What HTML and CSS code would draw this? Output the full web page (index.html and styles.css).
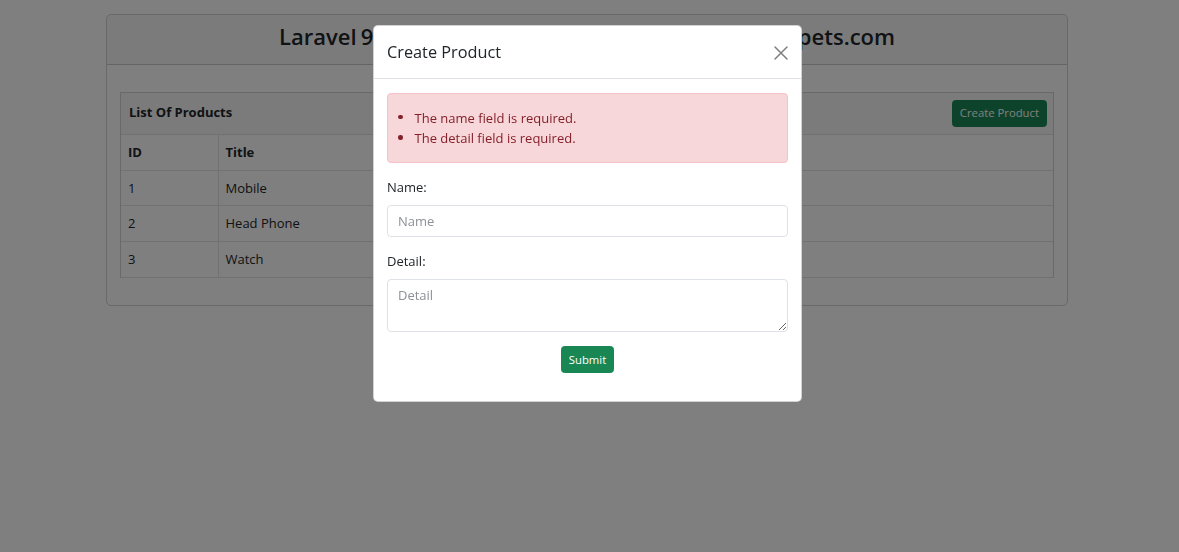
FILE: index.html
```html
<!DOCTYPE html>
<html lang="en">
<head>
<meta charset="utf-8">
<title>Laravel 9 Ajax Form Validation Example - NiceSnippets.com</title>
<link rel="stylesheet" href="styles.css">
</head>
<body>
<div class="page">
  <div class="card">
    <div class="card-header">
      <h2 class="page-title">Laravel 9 Ajax Form Validation Example - NiceSnippets.com</h2>
    </div>
    <div class="card-body">
      <div class="inner-card">
        <div class="inner-header">
          <span class="inner-title">List Of Products</span>
          <button class="btn btn-success">Create Product</button>
        </div>
        <table class="table">
          <thead>
            <tr><th class="col-id">ID</th><th class="col-title">Title</th><th>Detail</th></tr>
          </thead>
          <tbody>
            <tr><td>1</td><td>Mobile</td><td>Mobile Detail</td></tr>
            <tr><td>2</td><td>Head Phone</td><td>Head Phone Detail</td></tr>
            <tr><td>3</td><td>Watch</td><td>Watch Detail</td></tr>
          </tbody>
        </table>
      </div>
    </div>
  </div>
</div>

<div class="backdrop"></div>

<div class="modal">
  <div class="modal-header">
    <h5 class="modal-title">Create Product</h5>
    <button class="btn-close" aria-label="Close">
      <svg width="14" height="14" viewBox="0 0 14 14"><path d="M1 1L13 13M13 1L1 13" stroke="#000" stroke-width="1.5" stroke-linecap="round"/></svg>
    </button>
  </div>
  <div class="modal-body">
    <div class="alert">
      <ul class="errors">
        <li>The name field is required.</li>
        <li>The detail field is required.</li>
      </ul>
    </div>
    <form class="form">
      <div class="form-group">
        <label class="form-label" for="name">Name:</label>
        <input class="form-control" id="name" type="text" placeholder="Name">
      </div>
      <div class="form-group">
        <label class="form-label" for="detail">Detail:</label>
        <textarea class="form-control form-textarea" id="detail" placeholder="Detail"></textarea>
      </div>
      <div class="form-actions">
        <button class="btn btn-success" type="button">Submit</button>
      </div>
    </form>
  </div>
</div>
</body>
</html>
```

FILE: styles.css
```css
* { box-sizing: border-box; }

html, body {
  margin: 0;
  height: 100%;
}

body {
  font-family: "Open Sans", "Noto Sans", sans-serif;
  font-size: 13px;
  line-height: 20.6px;
  color: #212529;
  background: #fff;
}

.page {
  padding: 14px 111px 0 106px;
}

.card {
  border: 1px solid rgba(0, 0, 0, 0.175);
  border-radius: 5px;
  overflow: hidden;
}

.card-header {
  background: rgba(0, 0, 0, 0.03);
  border-bottom: 1px solid rgba(0, 0, 0, 0.175);
  padding: 7px 14px;
  text-align: center;
}

.page-title {
  margin: 0 0 7px;
  font-size: 22px;
  font-weight: 600;
  line-height: 28px;
  word-spacing: -1.5px;
  white-space: nowrap;
}

.card-body {
  padding: 27px 13px 27px;
}

.inner-card {
  border: 1px solid rgba(0, 0, 0, 0.175);
  border-bottom: 0;
}

.inner-header {
  display: flex;
  justify-content: space-between;
  align-items: center;
  padding: 7px 6px 7.5px 8px;
  background: rgba(0, 0, 0, 0.03);
}

.inner-title {
  font-weight: 700;
  margin-bottom: 3px;
}

.btn {
  font-family: inherit;
  font-size: 11.3px;
  line-height: 18px;
  padding: 3.4px 7px;
  border-radius: 3.4px;
  border: 1px solid transparent;
  cursor: pointer;
}

.btn-success {
  background: #198754;
  border-color: #198754;
  color: #fff;
}

.table {
  width: 100%;
  border-collapse: collapse;
}

.table th,
.table td {
  text-align: left;
  padding: 7px;
  border-top: 1px solid #dee2e6;
  border-bottom: 1px solid #dee2e6;
  border-left: 1px solid #dee2e6;
  line-height: 20.6px;
}

.table th:first-child,
.table td:first-child {
  border-left: 0;
}

.table th {
  font-weight: 700;
}

.col-id { width: 97px; }
.col-title { width: 290px; }

.backdrop {
  position: fixed;
  inset: 0;
  background: rgba(0, 0, 0, 0.5);
}

.modal {
  position: fixed;
  top: 25px;
  left: 373px;
  width: 429px;
  background: #fff;
  border: 1px solid rgba(0, 0, 0, 0.175);
  border-radius: 5px;
}

.modal-header {
  display: flex;
  align-items: center;
  justify-content: space-between;
  padding: 14px 14px 13px 13px;
  border-bottom: 1px solid #dee2e6;
}

.modal-title {
  margin: 0;
  font-size: 16.3px;
  font-weight: 500;
  line-height: 25px;
}

.btn-close {
  display: flex;
  padding: 0;
  margin-right: -1px;
  background: none;
  border: 0;
  opacity: 0.5;
  cursor: pointer;
}

.modal-body {
  padding: 14px 13px;
}

.alert {
  background: #f8d7da;
  border: 1px solid #f5c2c7;
  color: #842029;
  border-radius: 4px;
  padding: 13.5px 13px 13.5px 10px;
  margin-bottom: 14px;
}

.errors {
  margin: 0;
  padding: 0;
  list-style: none;
}

.errors li {
  display: flex;
  align-items: center;
}

.errors li::before {
  content: "";
  width: 4.5px;
  height: 4.5px;
  border-radius: 50%;
  background: #842029;
  margin: 0 12px 2px 0;
  flex: none;
}

.form-group {
  margin-bottom: 14.5px;
}

.form-label {
  display: block;
  margin-bottom: 7px;
}

.form-control {
  display: block;
  width: 100%;
  height: 32px;
  padding: 5px 10px;
  font-family: inherit;
  font-size: 13px;
  line-height: 20.6px;
  color: #212529;
  background: #fff;
  border: 1px solid #dee2e6;
  border-radius: 4px;
  outline: none;
}

.form-control::placeholder {
  color: #8c9197;
}

.form-textarea {
  height: 53px;
  resize: vertical;
}

.form-actions {
  display: flex;
  justify-content: center;
  padding-bottom: 13.5px;
}
```
